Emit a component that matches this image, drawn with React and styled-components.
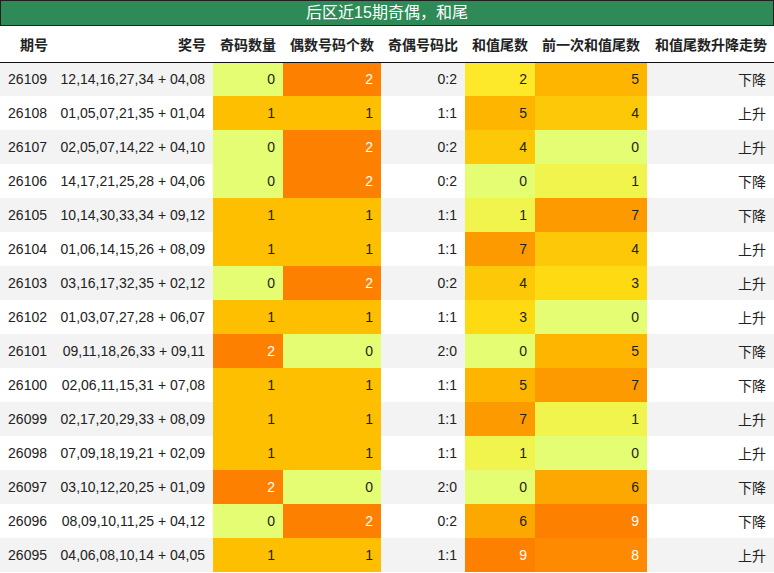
import React from "react";
import styled, { createGlobalStyle } from "styled-components";

const GlobalStyle = createGlobalStyle`
  body {
    margin: 0;
    background: #ffffff;
    font-family: "Liberation Sans", Arial, "Noto Sans CJK SC", sans-serif;
  }
`;

const Page = styled.div`
  width: 774px;
  color: #222222;
`;

const Title = styled.div`
  height: 24px;
  background: #2e8b57;
  border: 1px solid #1f1f1f;
  color: #ffffff;
  font-size: 16px;
  line-height: 24px;
  text-align: center;
`;

const Table = styled.table`
  width: 774px;
  border-collapse: collapse;
  table-layout: fixed;
  font-size: 14px;
`;

const HeadRow = styled.tr`
  height: 36px;
  border-bottom: 1px solid #111111;
`;

const HeadCell = styled.th`
  padding: 0 7px 0 0;
  text-align: right;
  font-weight: 700;
  font-family: "Noto Sans CJK SC", "Liberation Sans", sans-serif;
  white-space: nowrap;
`;

const Row = styled.tr`
  height: 34px;
  background: ${({ $shade }) => ($shade ? "#f3f3f3" : "#ffffff")};
`;

const Cell = styled.td`
  padding: 0 8px 0 0;
  text-align: right;
  white-space: nowrap;
  background: ${({ $bg }) => $bg || "transparent"};
  color: ${({ $light }) => ($light ? "#ffffff" : "#222222")};
  font-family: ${({ $cjk }) =>
    $cjk ? `"Noto Sans CJK SC", sans-serif` : `"Liberation Sans", Arial, sans-serif`};
`;

const countColors = ["#e4fd72", "#fdbf00", "#fd8000"];
const tailColors = [
  "#e4fd72",
  "#f0f44c",
  "#fde92a",
  "#fdda12",
  "#fdc808",
  "#fdb500",
  "#fda800",
  "#fd9a00",
  "#fd8a00",
  "#fd8000",
];

const widths = [55, 158, 70, 98, 84, 70, 112, 127];
const heads = ["期号", "奖号", "奇码数量", "偶数号码个数", "奇偶号码比", "和值尾数", "前一次和值尾数", "和值尾数升降走势"];

const rows = [
  ["26109", "12,14,16,27,34 + 04,08", 0, 2, 2, 5, "下降"],
  ["26108", "01,05,07,21,35 + 01,04", 1, 1, 5, 4, "上升"],
  ["26107", "02,05,07,14,22 + 04,10", 0, 2, 4, 0, "上升"],
  ["26106", "14,17,21,25,28 + 04,06", 0, 2, 0, 1, "下降"],
  ["26105", "10,14,30,33,34 + 09,12", 1, 1, 1, 7, "下降"],
  ["26104", "01,06,14,15,26 + 08,09", 1, 1, 7, 4, "上升"],
  ["26103", "03,16,17,32,35 + 02,12", 0, 2, 4, 3, "上升"],
  ["26102", "01,03,07,27,28 + 06,07", 1, 1, 3, 0, "上升"],
  ["26101", "09,11,18,26,33 + 09,11", 2, 0, 0, 5, "下降"],
  ["26100", "02,06,11,15,31 + 07,08", 1, 1, 5, 7, "下降"],
  ["26099", "02,17,20,29,33 + 08,09", 1, 1, 7, 1, "上升"],
  ["26098", "07,09,18,19,21 + 02,09", 1, 1, 1, 0, "上升"],
  ["26097", "03,10,12,20,25 + 01,09", 2, 0, 0, 6, "下降"],
  ["26096", "08,09,10,11,25 + 04,12", 0, 2, 6, 9, "下降"],
  ["26095", "04,06,08,10,14 + 04,05", 1, 1, 9, 8, "上升"],
];

const CountCell = ({ value }) => (
  <Cell $bg={countColors[value]} $light={value === 2}>
    {value}
  </Cell>
);

const TailCell = ({ value }) => (
  <Cell $bg={tailColors[value]} $light={value >= 8}>
    {value}
  </Cell>
);

export default function App() {
  return (
    <Page>
      <GlobalStyle />
      <Title>后区近15期奇偶，和尾</Title>
      <Table>
        <colgroup>
          {widths.map((w, i) => (
            <col key={i} style={{ width: w }} />
          ))}
        </colgroup>
        <thead>
          <HeadRow>
            {heads.map((h) => (
              <HeadCell key={h}>{h}</HeadCell>
            ))}
          </HeadRow>
        </thead>
        <tbody>
          {rows.map(([issue, nums, odd, even, tail, prev, trend], i) => (
            <Row key={issue} $shade={i % 2 === 0}>
              <Cell>{issue}</Cell>
              <Cell>{nums}</Cell>
              <CountCell value={odd} />
              <CountCell value={even} />
              <Cell>{`${odd}:${even}`}</Cell>
              <TailCell value={tail} />
              <TailCell value={prev} />
              <Cell $cjk>{trend}</Cell>
            </Row>
          ))}
        </tbody>
      </Table>
    </Page>
  );
}
